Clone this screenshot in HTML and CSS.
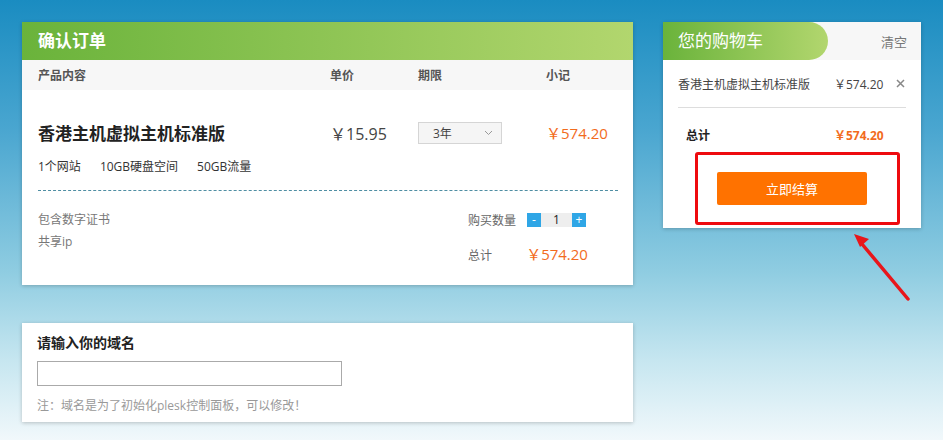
FILE: index.html
```html
<!DOCTYPE html>
<html>
	<head>
		<meta charset="utf-8">
		<title>确认订单</title>
		<link rel="stylesheet" href="styles.css">
	</head>
	<body>
		<div class="page">
			<div class="main">
				<div class="card order">
					<div class="card-title">确认订单</div>
					<div class="cols">
						<span>产品内容</span>
						<span>单价</span>
						<span>期限</span>
						<span>小记</span>
					</div>
					<div class="product">
						<div class="cols product-row">
							<span class="product-name">香港主机虚拟主机标准版</span>
							<span class="price">￥15.95</span>
							<span class="select">3年
								<svg width="9" height="6" viewBox="0 0 9 6"><path d="M1 1l3.5 3.5L8 1" fill="none" stroke="#999" stroke-width="1"/></svg>
							</span>
							<span class="subtotal">￥574.20</span>
						</div>
						<ul class="features">
							<li>1个网站</li>
							<li>10GB硬盘空间</li>
							<li>50GB流量</li>
						</ul>
					</div>
					<div class="extra">
						<ul class="extra-list">
							<li>包含数字证书</li>
							<li>共享ip</li>
						</ul>
						<div class="sum">
							<div class="qty">
								<span class="label">购买数量</span>
								<button class="qty-btn">-</button>
								<span class="qty-num">1</span>
								<button class="qty-btn">+</button>
							</div>
							<div class="total">
								<span class="label">总计</span>
								<span class="total-price">￥574.20</span>
							</div>
						</div>
					</div>
				</div>

				<div class="card domain">
					<div class="domain-title">请输入你的域名</div>
					<input class="domain-input" type="text">
					<p class="domain-note">注：域名是为了初始化plesk控制面板，可以修改！</p>
				</div>
			</div>

			<div class="side">
				<div class="card cart">
					<div class="cart-head">
						<span class="cart-title">您的购物车</span>
						<a class="cart-clear">清空</a>
					</div>
					<div class="cart-item">
						<span class="cart-name">香港主机虚拟主机标准版</span>
						<span class="cart-price">￥574.20</span>
						<svg class="cart-del" width="9" height="9" viewBox="0 0 9 9"><path d="M1 1l7 7M8 1l-7 7" stroke="#888" stroke-width="1.5"/></svg>
					</div>
					<div class="cart-total">
						<span>总计</span>
						<span class="cart-total-price">￥574.20</span>
					</div>
					<div class="cart-btn-wrap">
						<button class="pay">立即结算</button>
					</div>
					<div class="mark"></div>
				</div>
				<svg class="arrow" width="70" height="80" viewBox="0 0 70 80">
					<path d="M62 75L16 20" stroke="#e8161b" stroke-width="3.5" stroke-linecap="round"/>
					<path d="M8 10l15 5-9 8z" fill="#e8161b"/>
				</svg>
			</div>
		</div>
	</body>
</html>
```

FILE: styles.css
```css
*{
	margin: 0;
	padding: 0;
	box-sizing: border-box;
}

ul{
	list-style: none;
}

html, body{
	height: 100%;
}

body{
	font-family: "Open Sans", "Noto Sans CJK SC", sans-serif;
	font-size: 12px;
	color: #333;
	background: linear-gradient(#1a8cc1 0, #4aa6d0 130px, #8ecce1 270px, #c6e6f0 360px, #f1f8fb 440px);
}

.page{
	display: flex;
	align-items: flex-start;
	gap: 30px;
	padding: 22px;
}

.card{
	background: #fff;
	box-shadow: 0 1px 4px rgba(0, 0, 0, .22);
}

/* 左边 */
.main{
	width: 611px;
	display: flex;
	flex-direction: column;
	gap: 38px;
}

.card-title{
	height: 38px;
	line-height: 38px;
	padding-left: 16px;
	color: #fff;
	font-size: 17px;
	font-weight: bold;
	background: linear-gradient(to right, #6ab33b, #b2d66e);
}

.cols{
	display: grid;
	grid-template-columns: 292px 88px 128px 1fr;
	align-items: center;
	padding-left: 16px;
}

.order > .cols{
	height: 30px;
	background: #f7f7f7;
	color: #555;
	font-weight: bold;
}

.product{
	padding: 30px 15px 0 16px;
}

.product .product-row{
	padding-left: 0;
	height: 24px;
}

.product-name{
	font-size: 17px;
	font-weight: bold;
	color: #222;
}

.price{
	font-size: 16px;
	color: #444;
}

.select{
	width: 84px;
	height: 22px;
	border: 1px solid #d5d5d5;
	background: #f5f5f5;
	display: flex;
	align-items: center;
	justify-content: space-between;
	padding: 0 8px 0 14px;
	color: #444;
}

.subtotal{
	font-size: 15px;
	color: #f26b1d;
}

.features{
	display: flex;
	gap: 19px;
	margin-top: 14px;
	line-height: 18px;
	padding-bottom: 14px;
	border-bottom: 1px dashed #4f8ea3;
}

.extra{
	display: flex;
	justify-content: space-between;
	padding: 18px 15px 17px 16px;
}

.extra-list li{
	line-height: 22px;
	color: #777;
}

.sum{
	width: 150px;
}

.label{
	display: inline-block;
	width: 59px;
	color: #666;
}

.qty{
	display: flex;
	align-items: center;
	height: 22px;
}

.qty-btn{
	width: 14px;
	height: 14px;
	border: none;
	background: #2fa6e6;
	color: #fff;
	font-size: 12px;
	line-height: 14px;
	font-family: inherit;
}

.qty-num{
	width: 31px;
	height: 14px;
	line-height: 14px;
	background: #eee;
	text-align: center;
	color: #222;
}

.total{
	margin-top: 11px;
	line-height: 24px;
}

.total-price{
	font-size: 15px;
	color: #f26b1d;
	margin-left: -4px;
}

.domain{
	padding: 11px 15px 7px 15px;
}

.domain-title{
	font-size: 14px;
	font-weight: bold;
	color: #222;
	line-height: 18px;
}

.domain-input{
	display: block;
	width: 305px;
	height: 25px;
	margin-top: 9px;
	border: 1px solid #aaa;
}

.domain-note{
	margin-top: 11px;
	line-height: 18px;
	color: #999;
}

/* 右边购物车 */
.side{
	position: relative;
	width: 258px;
}

.cart{
	position: relative;
	padding-bottom: 23px;
}

.cart-head{
	height: 38px;
	background: #f7f7f7;
	display: flex;
	align-items: center;
	justify-content: space-between;
}

.cart-title{
	width: 165px;
	height: 38px;
	line-height: 38px;
	padding-left: 15px;
	border-radius: 0 19px 19px 0;
	background: linear-gradient(to right, #6ab33b, #b2d66e);
	color: #fff;
	font-size: 17px;
}

.cart-clear{
	color: #777;
	font-size: 13px;
	padding-right: 14px;
	cursor: pointer;
}

.cart-item{
	display: flex;
	align-items: center;
	margin: 0 15px;
	height: 48px;
	border-bottom: 1px solid #ddd;
}

.cart-name{
	width: 156px;
	color: #444;
}

.cart-price{
	color: #444;
}

.cart-del{
	margin-left: 13px;
}

.cart-total{
	display: flex;
	padding: 20px 0 0 23px;
	line-height: 16px;
	font-weight: bold;
	color: #222;
}

.cart-total span:first-child{
	width: 148px;
}

.cart-total-price{
	color: #f26b1d;
}

.cart-btn-wrap{
	display: flex;
	justify-content: center;
	margin-top: 28px;
}

.pay{
	width: 150px;
	height: 33px;
	border: none;
	border-radius: 2px;
	background: #ff7200;
	color: #fff;
	font-size: 13px;
	font-family: inherit;
	cursor: pointer;
}

/* 红色标注 */
.mark{
	position: absolute;
	left: 32px;
	top: 130px;
	width: 205px;
	height: 73px;
	border: 3px solid #ee0a0f;
	border-radius: 3px;
}

.arrow{
	position: absolute;
	left: 183px;
	top: 202px;
}
```
